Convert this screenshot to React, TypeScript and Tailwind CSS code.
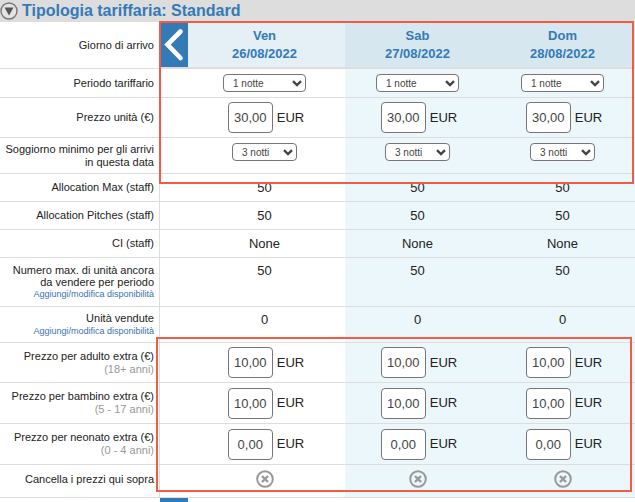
import React from 'react';
import clsx from 'clsx';

interface Day {
    name: string;
    date: string;
    weekend: boolean;
}

const days: Day[] = [
    { name: 'Ven', date: '26/08/2022', weekend: false },
    { name: 'Sab', date: '27/08/2022', weekend: true },
    { name: 'Dom', date: '28/08/2022', weekend: true },
];

interface RowProps {
    label: React.ReactNode;
    height: string;
    labelAlign?: string;
    cellAlign?: string;
    children: (day: Day) => React.ReactNode;
}

const Row = ({ label, height, labelAlign = 'align-middle', cellAlign = 'align-middle', children }: RowProps) => (
    <tr className={height}>
        <th
            scope="row"
            className={clsx('border-r border-b border-[#ddd] pr-[5px] text-right text-[11px] leading-[13px] font-normal', labelAlign)}
        >
            {label}
        </th>

        {days.map((day, index) => (
            <td
                key={day.date}
                className={clsx(
                    'border-b border-[#ddd] text-center text-[13px] leading-[18px]',
                    cellAlign,
                    index === 0 && 'pl-6',
                    day.weekend && 'bg-[#ebf7fb]',
                )}
            >
                {children(day)}
            </td>
        ))}
    </tr>
);

const SelectBox = ({ label, value, width }: { label: string; value: string; width: string }) => (
    <div className={clsx('relative mx-auto', width)}>
        <select
            aria-label={label}
            defaultValue={value}
            className="block h-[18px] w-full appearance-none rounded-[4px] border border-[#767676] bg-white pt-px pl-[9px] text-[10px] leading-[16px] text-[#444]"
        >
            <option>{value}</option>
        </select>

        <svg viewBox="0 0 10 7" className="pointer-events-none absolute top-[6px] right-1 h-[7px] w-[10px]" fill="none" stroke="#444" strokeWidth="2.4">
            <path d="M1 1.2 L5 5 L9 1.2" />
        </svg>
    </div>
);

const PriceField = ({ label, value }: { label: string; value: string }) => (
    <label className="flex items-center justify-center gap-1 pl-[3px]">
        <input
            type="text"
            aria-label={label}
            defaultValue={value}
            className="h-[31px] w-[45px] rounded-[4px] border border-[#767676] bg-white text-center text-[13px] text-[#444]"
        />
        <span>EUR</span>
    </label>
);

const AvailabilityLink = () => (
    <a href="#disponibilita" className="block text-[9px] leading-[13px] text-[#3a74b0]">
        Aggiungi/modifica disponibilità
    </a>
);

const ExtraLabel = ({ title, age }: { title: string; age: string }) => (
    <>
        {title}
        <span className="block text-[#999]">{age}</span>
    </>
);

const extras = [
    { title: 'Prezzo per adulto extra (€)', age: '(18+ anni)', price: '10,00', height: 'h-10' },
    { title: 'Prezzo per bambino extra (€)', age: '(5 - 17 anni)', price: '10,00', height: 'h-[41px]' },
    { title: 'Prezzo per neonato extra (€)', age: '(0 - 4 anni)', price: '0,00', height: 'h-[41px]' },
];

const allocations = [
    { label: 'Allocation Max (staff)', value: '50' },
    { label: 'Allocation Pitches (staff)', value: '50' },
    { label: 'CI (staff)', value: 'None' },
];

const App = () => (
    <main className="relative bg-white font-['Liberation_Sans',Arial,sans-serif] text-[#222]">
        <header className="flex h-[22px] items-center gap-1 bg-[#ddd]">
            <button type="button" aria-label="Comprimi" className="shrink-0">
                <svg viewBox="0 0 18 18" className="block h-[18px] w-[18px]">
                    <circle cx="9" cy="9" r="8" fill="#e4e4e4" stroke="#777" strokeWidth="1.4" />
                    <path d="M4.5 5.5 H13.5 L9 13.5 Z" fill="#555" />
                </svg>
            </button>
            <h1 className="text-[16px] leading-[20px] font-bold text-[#337ab7]">Tipologia tariffaria: Standard</h1>
        </header>

        <table className="w-full table-fixed border-separate border-spacing-0">
            <colgroup>
                <col className="w-[160px]" />
                <col className="w-[185px]" />
                <col />
                <col />
            </colgroup>

            <thead>
                <tr>
                    <th scope="row" className="border-r border-b border-[#ddd] pr-[5px] text-right text-[11px] leading-[13px] font-normal">
                        Giorno di arrivo
                    </th>

                    {days.map((day, index) => (
                        <th
                            key={day.date}
                            scope="col"
                            className={clsx(
                                'border-b-2 border-[#ddd] text-[13px] leading-[18px] font-bold text-[#337ab7]',
                                day.weekend ? 'bg-[#d7e7f0]' : 'bg-[#e4eff6]',
                            )}
                        >
                            <div className="flex h-[45px] items-center">
                                {index === 0 && (
                                    <button type="button" aria-label="Giorni precedenti" className="h-full w-7 shrink-0 bg-[#337ab7]">
                                        <svg viewBox="0 0 28 45" className="block h-full w-full" fill="none" stroke="#fff" strokeWidth="4.6" strokeLinecap="round">
                                            <path d="M20.5 9.5 L7.5 22.5 L20.5 36" />
                                        </svg>
                                    </button>
                                )}
                                <div className={clsx('flex-1', index === 0 && 'pr-1')}>
                                    {day.name}
                                    <br />
                                    {day.date}
                                </div>
                            </div>
                        </th>
                    ))}
                </tr>
            </thead>

            <tbody>
                <Row label="Periodo tariffario" height="h-[29px]">
                    {(day) => <SelectBox label={`Periodo tariffario ${day.name}`} value="1 notte" width="w-[83px]" />}
                </Row>

                <Row label="Prezzo unità (€)" height="h-10">
                    {(day) => <PriceField label={`Prezzo unità ${day.name}`} value="30,00" />}
                </Row>

                <Row
                    label={<>Soggiorno minimo per gli arrivi<br />in questa data</>}
                    height="h-9"
                    cellAlign="align-top pt-[5px]"
                >
                    {(day) => <SelectBox label={`Soggiorno minimo ${day.name}`} value="3 notti" width="w-[65px]" />}
                </Row>

                {allocations.map(({ label, value }) => (
                    <Row key={label} label={label} height="h-7">
                        {() => value}
                    </Row>
                ))}

                <Row
                    label={<><span className="block leading-[12px]">Numero max. di unità ancora<br />da vendere per periodo</span><AvailabilityLink /></>}
                    height="h-[49px]"
                    cellAlign="align-top pt-1"
                >
                    {() => '50'}
                </Row>

                <Row label={<>Unità vendute<AvailabilityLink /></>} height="h-9" cellAlign="align-top pt-1">
                    {() => '0'}
                </Row>

                {extras.map(({ title, age, price, height }) => (
                    <Row key={title} label={<ExtraLabel title={title} age={age} />} height={height}>
                        {(day) => <PriceField label={`${title} ${day.name}`} value={price} />}
                    </Row>
                ))}

                <Row
                    label="Cancella i prezzi qui sopra"
                    height="h-[33px]"
                    labelAlign="align-top pt-2"
                    cellAlign="align-top pt-[5px]"
                >
                    {(day) => (
                        <button type="button" aria-label={`Cancella i prezzi ${day.name}`} className="mx-auto block">
                            <svg viewBox="0 0 18 18" className="block h-[18px] w-[18px]" fill="none" stroke="#999">
                                <circle cx="9" cy="9" r="7.8" strokeWidth="2" />
                                <path d="M6 6 L12 12 M12 6 L6 12" strokeWidth="2.4" />
                            </svg>
                        </button>
                    )}
                </Row>
            </tbody>
        </table>

        <div className="ml-[160px] h-1 w-7 bg-[#337ab7]" />

        {/* highlighted areas */}
        <div className="pointer-events-none absolute top-[21px] right-px left-[159px] h-[163px] border-2 border-[#f25c42]" />
        <div className="pointer-events-none absolute top-[337px] right-[3px] left-[156px] h-[155px] border-2 border-[#f25c42]" />
    </main>
);

export default App;
